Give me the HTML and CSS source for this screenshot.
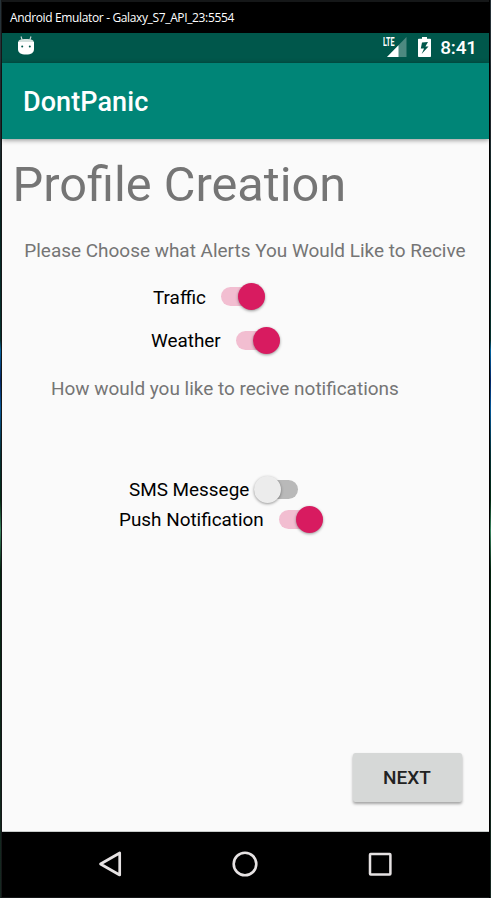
FILE: index.html
```html
<!DOCTYPE html>
<html lang="en">
<head>
<meta charset="utf-8">
<title>DontPanic</title>
<link rel="stylesheet" href="styles.css">
</head>
<body>
<div class="emulator">
  <div class="window-title"><span>Android Emulator - Galaxy_S7_API_23:5554</span></div>
  <div class="status-bar">
    <svg class="droid" width="18" height="20" viewBox="0 0 18 20">
      <path d="M4 .5l1.200 3.500M14 .5l-1.200 3.500" stroke="#d2e0dd" stroke-width="1.100" fill="none"/>
      <path d="M1.200 6.500C1.300 3.800 3.500 3 9 3s7.700.8 7.800 3.500z" fill="#d2e0dd"/>
      <path d="M1 6h16v7c0 3.700-2.600 5.500-8 5.500s-8-1.800-8-5.500z" fill="#fff"/>
      <circle cx="5.200" cy="10.500" r="1" fill="#00574b"/><circle cx="12.800" cy="10.500" r="1" fill="#00574b"/>
    </svg>
    <div class="network">
      <svg width="25" height="20" viewBox="0 0 25 20">
        <path d="M24.500 0v20H5z" fill="#4d8980"/>
        <path d="M16.500 8.300V20H5z" fill="#fff"/>
      </svg>
      <span class="lte">LTE</span>
    </div>
    <svg class="battery" width="13" height="20" viewBox="0 0 13 20">
      <path d="M4 0h5v1.700h3.200q.8 0 .8.800v16.700q0 .8-.8.800H.8q-.8 0-.8-.8V2.500q0-.8.8-.8H4z" fill="#fff"/>
      <path d="M10 5L4 5.600L2.800 11.500h3.300L3.600 17l6.900-7.400H7.400z" fill="#00574b"/>
    </svg>
    <span class="clock">8:41</span>
  </div>
  <header class="app-bar"><span>DontPanic</span></header>
  <main class="content">
    <h1><span>Profile Creation</span></h1>
    <p class="alerts">Please Choose what Alerts You Would Like to Recive</p>
    <label class="row traffic"><span>Traffic</span><i class="switch on"></i></label>
    <label class="row weather"><span>Weather</span><i class="switch on"></i></label>
    <p class="notify">How would you like to recive notifications</p>
    <label class="row sms"><span>SMS Messege</span><i class="switch"></i></label>
    <label class="row push"><span>Push Notification</span><i class="switch on"></i></label>
    <button class="next">NEXT</button>
  </main>
  <nav class="nav-bar">
    <svg width="24" height="28" viewBox="0 0 24 28"><path d="M21.700 3v22L2.500 14z" fill="none" stroke="#e6e2e3" stroke-width="2.700" stroke-linejoin="round"/></svg>
    <svg width="26" height="26" viewBox="0 0 26 26"><circle cx="13" cy="13" r="11.300" fill="none" stroke="#e6e2e3" stroke-width="2.600"/></svg>
    <svg width="24" height="24" viewBox="0 0 24 24"><rect x="2" y="2" width="20.400" height="20.400" rx=".7" fill="none" stroke="#e6e2e3" stroke-width="2.500"/></svg>
  </nav>
</div>
</body>
</html>
```
FILE: styles.css
```css
* { box-sizing: border-box; }
body {
  margin: 0;
  width: 491px;
  height: 898px;
  overflow: hidden;
  font-family: Roboto, sans-serif;
  background: linear-gradient(#263238 0, #263035 130px, #06221f 200px, #06322e 340px, #0565a0 350px, #042767 380px, #07599a 408px, #043034 455px, #032b14 500px, #3a8560 530px, #032510 570px, #172822 898px);
}
.emulator {
  width: 489px;
  height: 898px;
  margin-left: 1px;
  padding: 2px 0 1px 1px;
  background: #151718;
  display: flex;
  flex-direction: column;
  border-right: 1px solid #000;
}
.window-title {
  height: 31px;
  padding: 0 8px;
  font: 12px/31px "Open Sans", "Noto Sans", sans-serif;
  color: #fff;
  background: #000;
  white-space: nowrap;
}
.window-title span { letter-spacing: -.36px; }
.status-bar {
  height: 30px;
  background: #00574b;
  display: flex;
  align-items: flex-start;
  padding: 0 12px 0 15px;
}
.droid { margin-top: 3px; }
.network { position: relative; height: 20px; margin: 4px 11px 0 auto; }
.network svg, .battery { display: block; }
.lte {
  position: absolute;
  left: .5px;
  top: 0;
  font-size: 12px;
  line-height: 11px;
  font-weight: 700;
  color: #fff;
  transform: scaleX(.6);
  transform-origin: left;
}
.battery { margin: 4px 9px 0 0; }
.clock { font-size: 19px; line-height: 29px; font-weight: 500; color: #fff; letter-spacing: -.15px; }
.app-bar {
  height: 75.500px;
  flex: none;
  background: #008577;
  color: #fff;
  font-size: 27px;
  font-weight: 500;
  line-height: 79px;
  padding-left: 21px;
  letter-spacing: .08px;
  box-shadow: 0 1px 5px rgba(0, 0, 0, .45);
  z-index: 1;
}
.content {
  flex: 1;
  background: #fafafa;
  display: flex;
  flex-direction: column;
  align-items: flex-start;
  color: #757575;
  font-size: 19px;
  line-height: 24px;
  white-space: nowrap;
  border-bottom: 1px solid #c8cccb;
}
h1 { margin: 17.500px 0 0 10.500px; font-size: 48.700px; font-weight: 400; line-height: 58px; }
p { margin: 0; }
.alerts { margin: 25px 0 0 22.300px; font-size: 18.970px; }
.row { display: flex; height: 24px; align-items: center; color: #000; font-size: 18.900px; }
.switch { position: relative; top: -1px; width: 44px; height: 19px; border-radius: 10px; background: #b9b9b9; }
.switch::after {
  content: "";
  position: absolute;
  top: -4px;
  left: 0;
  width: 27px;
  height: 27px;
  border-radius: 50%;
  background: #ececec;
  box-shadow: 0 1px 3px rgba(0, 0, 0, .4);
}
.switch.on { background: #f2bed1; }
.switch.on::after { left: 17px; background: #d81b60; }
.traffic { margin: 23px 0 0 151px; gap: 15px; }
.traffic .switch { top: -2px; }
.weather { margin: 19px 0 0 149px; gap: 15px; }
.notify { margin: 24px 0 0 49px; font-size: 18.950px; }
.sms { margin: 77px 0 0 127px; gap: 4.500px; }
.push { margin: 6px 0 0 117px; gap: 15px; }
.next {
  width: 109px;
  height: 49px;
  margin: auto 27.500px 29px auto;
  padding: 0;
  border: 0;
  border-radius: 2.500px;
  background: #d6d8d7;
  color: #222;
  font: 500 19px/49px Roboto, sans-serif;
  box-shadow: 0 2px 3px rgba(0, 0, 0, .35);
}
.nav-bar {
  height: 65px;
  flex: none;
  background: #000;
  display: flex;
  justify-content: space-between;
  align-items: center;
  padding: 0 97px 2px 96px;
}
```
